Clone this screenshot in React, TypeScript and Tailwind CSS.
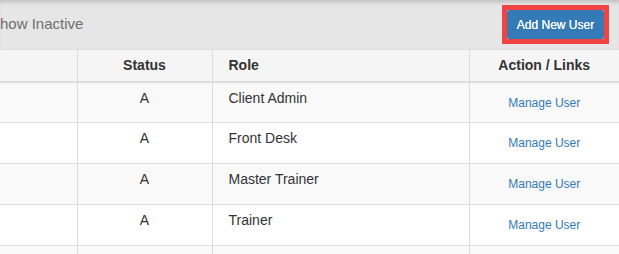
import React from 'react';

const users = [
  { status: 'A', role: 'Client Admin' },
  { status: 'A', role: 'Front Desk' },
  { status: 'A', role: 'Master Trainer' },
  { status: 'A', role: 'Trainer' },
];

const App: React.FC = () => {
  return (
    <div className="w-[619px] h-[254px] overflow-hidden bg-white font-['Liberation_Sans',Arial,sans-serif] text-[#333]">
      {/* Toolbar */}
      <div className="h-[49px] bg-[#e6e6e6] shadow-[inset_0_4px_4px_-2px_rgba(0,0,0,0.18)] flex items-center justify-between pr-[10px]">
        <span className="-ml-[10px] text-[15px] text-[#6f6f6f]">Show Inactive</span>
        <div className="border-[5px] border-[#f24343]">
          <button
            type="button"
            className="w-[97px] h-[29px] bg-[#337ab7] text-white text-[12px] rounded-[2px] [text-shadow:0_0_0.4px_#fff]"
          >
            Add New User
          </button>
        </div>
      </div>

      {/* Users table */}
      <table className="w-[619px] table-fixed border-collapse text-[14px] leading-[20px]">
        <colgroup>
          <col className="w-[77px]" />
          <col className="w-[135px]" />
          <col className="w-[257px]" />
          <col className="w-[150px]" />
        </colgroup>
        <thead>
          <tr className="bg-[#f5f5f5] h-[32px] border-t border-b-2 border-[#dddddd]">
            <th className="border-r border-[#dddddd]"></th>
            <th className="border-r border-[#dddddd] font-bold text-center align-middle">Status</th>
            <th className="border-r border-[#dddddd] font-bold text-left align-middle pl-[16px]">Role</th>
            <th className="font-bold text-center align-middle">Action / Links</th>
          </tr>
        </thead>
        <tbody>
          {users.map((u, i) => (
            <tr key={i} className={`h-[41px] border-b border-[#dddddd] ${i % 2 === 0 ? 'bg-[#f9f9f9]' : 'bg-white'}`}>
              <td className="border-r border-[#dddddd]"></td>
              <td className="border-r border-[#dddddd] text-center align-top pt-[5px]">{u.status}</td>
              <td className="border-r border-[#dddddd] align-top pt-[5px] pl-[16px]">{u.role}</td>
              <td className="text-center align-top pt-[9px]">
                <a href="#" className="text-[12px] leading-[18px] text-[#337ab7]">Manage User</a>
              </td>
            </tr>
          ))}
          <tr className="h-[41px] bg-[#f9f9f9]">
            <td className="border-r border-[#dddddd]"></td>
            <td className="border-r border-[#dddddd]"></td>
            <td className="border-r border-[#dddddd]"></td>
            <td></td>
          </tr>
        </tbody>
      </table>
    </div>
  );
};

export default App;
